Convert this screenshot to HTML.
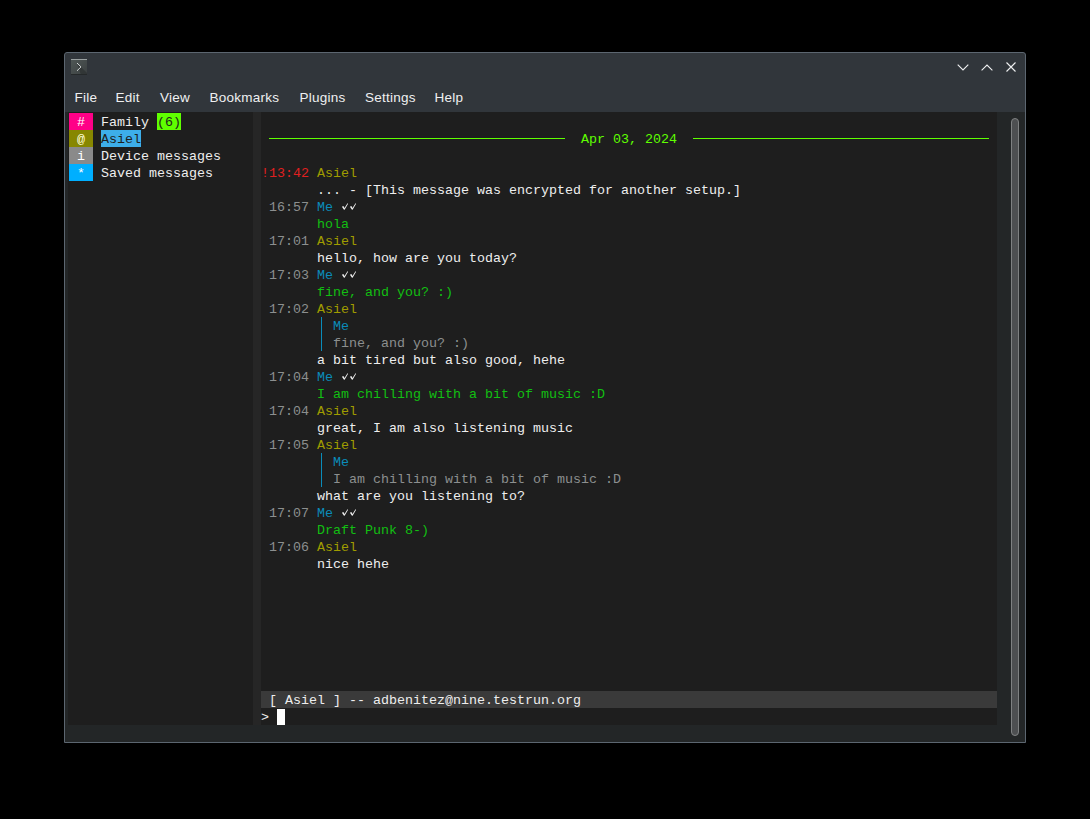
<!DOCTYPE html>
<html><head><meta charset="utf-8">
<style>
html,body{margin:0;padding:0}
body{width:1090px;height:819px;background:#000;position:relative;overflow:hidden;font-family:"Liberation Sans",sans-serif}
#win{position:absolute;left:64px;top:52px;width:960px;height:689px;border:1px solid #5c6670;border-radius:3px 3px 0 0;background:#31363b}
#kon{position:absolute;left:65px;top:112px;width:960px;height:630px;background:#232627}
#term{position:absolute;left:68px;top:112px;width:929px;height:613px;background:#1e1e1e}
#sep{position:absolute;left:253px;top:112px;width:8px;height:613px;background:#262626}
#sb{position:absolute;left:1011px;top:118px;width:6px;height:616px;border:1px solid #7f8182;border-radius:4px;background:#4d4f51}
.m{position:absolute;top:89px;font-size:13.5px;letter-spacing:0.25px;line-height:18px;color:#eff0f1;white-space:pre}
.t{position:absolute;height:17px;line-height:17px;font-family:"Liberation Mono",monospace;font-size:13.333px;white-space:pre}
.b{position:absolute;height:17px}
.hl{position:absolute;height:1px;background:#5fff00}
.qb{position:absolute;width:1px;height:17px;background:#0a8cba}
.ck{position:absolute}
#icon{position:absolute;left:71px;top:59px;width:16px;height:16px;overflow:hidden;background:linear-gradient(135deg,#4f5755,#3b4041);}
#icon:after{content:"";position:absolute;left:0;bottom:0;width:16px;height:1px;background:#25292a}
#icon:before{content:"";position:absolute;left:0;top:0;width:16px;height:1px;background:#9aa0a0}
.tb{position:absolute}
</style></head><body>
<div id="win"></div>
<div id="icon"><svg style="position:absolute;left:0;top:0" width="16" height="16" viewBox="0 0 16 16"><path d="M6 4 L10 8 L16 14 L16 16 L10 16 Z" fill="#2c3131" opacity="0.7"/><path d="M6 4 L10 7.9 L6 11.8" stroke="#d0d4d4" stroke-width="1" fill="none"/></svg></div>
<svg class="tb" style="left:955px;top:60px" width="16" height="16" viewBox="0 0 16 16"><path d="M2.7 4.6 L8 9.9 L13.3 4.6" stroke="#eff0f1" stroke-width="1.1" fill="none"/></svg>
<svg class="tb" style="left:979px;top:60px" width="16" height="16" viewBox="0 0 16 16"><path d="M2.6 10.4 L8 5 L13.4 10.4" stroke="#eff0f1" stroke-width="1.1" fill="none"/></svg>
<svg class="tb" style="left:1003px;top:59px" width="16" height="16" viewBox="0 0 16 16"><path d="M3.5 3.5 L12.5 12.5 M12.5 3.5 L3.5 12.5" stroke="#eff0f1" stroke-width="1.1" fill="none"/></svg>
<div class="m" style="left:74.5px">File</div>
<div class="m" style="left:115.5px">Edit</div>
<div class="m" style="left:160px">View</div>
<div class="m" style="left:209.6px">Bookmarks</div>
<div class="m" style="left:299.4px">Plugins</div>
<div class="m" style="left:365px">Settings</div>
<div class="m" style="left:434.6px">Help</div>
<div id="kon"></div>
<div id="term"></div>
<div id="sep"></div>
<div id="sb"></div>
<div class="b" style="left:69px;top:113px;width:24px;background:#ff0087"></div>
<div class="t" style="left:77px;top:114px;color:#ffffff;">#</div>
<div class="t" style="left:101px;top:114px;color:#eeeeee;">Family</div>
<div class="b" style="left:157px;top:113px;width:24px;background:#5fff00"></div>
<div class="t" style="left:157px;top:114px;color:#1e1e1e;">(6)</div>
<div class="b" style="left:69px;top:130px;width:24px;background:#878700"></div>
<div class="t" style="left:77px;top:131px;color:#ffffd7;">@</div>
<div class="b" style="left:101px;top:130px;width:40px;background:#3daee9"></div>
<div class="t" style="left:101px;top:131px;color:#1e1e1e;">Asiel</div>
<div class="b" style="left:69px;top:147px;width:24px;background:#8a8a8a"></div>
<div class="t" style="left:77px;top:148px;color:#ffffff;">i</div>
<div class="t" style="left:101px;top:148px;color:#eeeeee;">Device messages</div>
<div class="b" style="left:69px;top:164px;width:24px;background:#00afff"></div>
<div class="t" style="left:77px;top:165px;color:#ffffff;">*</div>
<div class="t" style="left:101px;top:165px;color:#eeeeee;">Saved messages</div>
<div class="hl" style="left:269px;top:138px;width:296px"></div>
<div class="t" style="left:581px;top:131px;color:#5fff00;">Apr 03, 2024</div>
<div class="hl" style="left:693px;top:138px;width:296px"></div>
<div class="t" style="left:261px;top:165px;color:#e02020;">!13:42</div>
<div class="t" style="left:317px;top:165px;color:#a09c00;">Asiel</div>
<div class="t" style="left:317px;top:182px;color:#eeeeee;">... - [This message was encrypted for another setup.]</div>
<div class="t" style="left:269px;top:199px;color:#8c8f8f;">16:57</div>
<div class="t" style="left:317px;top:199px;color:#0a8cba;">Me</div>
<svg class="ck" style="left:341px;top:198px" width="16" height="17" viewBox="0 0 16 17"><path d="M0.9 8.7 L2.4 8.0 L3.5 10.0 L6.5 5.2 L7.1 5.7 L3.6 11.8 L3.0 11.8 Z M8.9 8.7 L10.4 8.0 L11.5 10.0 L14.5 5.2 L15.1 5.7 L11.6 11.8 L11.0 11.8 Z" fill="#eeeeee"/></svg>
<div class="t" style="left:317px;top:216px;color:#12bf12;">hola</div>
<div class="t" style="left:269px;top:233px;color:#8c8f8f;">17:01</div>
<div class="t" style="left:317px;top:233px;color:#a09c00;">Asiel</div>
<div class="t" style="left:317px;top:250px;color:#eeeeee;">hello, how are you today?</div>
<div class="t" style="left:269px;top:267px;color:#8c8f8f;">17:03</div>
<div class="t" style="left:317px;top:267px;color:#0a8cba;">Me</div>
<svg class="ck" style="left:341px;top:266px" width="16" height="17" viewBox="0 0 16 17"><path d="M0.9 8.7 L2.4 8.0 L3.5 10.0 L6.5 5.2 L7.1 5.7 L3.6 11.8 L3.0 11.8 Z M8.9 8.7 L10.4 8.0 L11.5 10.0 L14.5 5.2 L15.1 5.7 L11.6 11.8 L11.0 11.8 Z" fill="#eeeeee"/></svg>
<div class="t" style="left:317px;top:284px;color:#12bf12;">fine, and you? :)</div>
<div class="t" style="left:269px;top:301px;color:#8c8f8f;">17:02</div>
<div class="t" style="left:317px;top:301px;color:#a09c00;">Asiel</div>
<div class="qb" style="left:321px;top:317px"></div>
<div class="t" style="left:333px;top:318px;color:#0a8cba;">Me</div>
<div class="qb" style="left:321px;top:334px"></div>
<div class="t" style="left:333px;top:335px;color:#8c8f8f;">fine, and you? :)</div>
<div class="t" style="left:317px;top:352px;color:#eeeeee;">a bit tired but also good, hehe</div>
<div class="t" style="left:269px;top:369px;color:#8c8f8f;">17:04</div>
<div class="t" style="left:317px;top:369px;color:#0a8cba;">Me</div>
<svg class="ck" style="left:341px;top:368px" width="16" height="17" viewBox="0 0 16 17"><path d="M0.9 8.7 L2.4 8.0 L3.5 10.0 L6.5 5.2 L7.1 5.7 L3.6 11.8 L3.0 11.8 Z M8.9 8.7 L10.4 8.0 L11.5 10.0 L14.5 5.2 L15.1 5.7 L11.6 11.8 L11.0 11.8 Z" fill="#eeeeee"/></svg>
<div class="t" style="left:317px;top:386px;color:#12bf12;">I am chilling with a bit of music :D</div>
<div class="t" style="left:269px;top:403px;color:#8c8f8f;">17:04</div>
<div class="t" style="left:317px;top:403px;color:#a09c00;">Asiel</div>
<div class="t" style="left:317px;top:420px;color:#eeeeee;">great, I am also listening music</div>
<div class="t" style="left:269px;top:437px;color:#8c8f8f;">17:05</div>
<div class="t" style="left:317px;top:437px;color:#a09c00;">Asiel</div>
<div class="qb" style="left:321px;top:453px"></div>
<div class="t" style="left:333px;top:454px;color:#0a8cba;">Me</div>
<div class="qb" style="left:321px;top:470px"></div>
<div class="t" style="left:333px;top:471px;color:#8c8f8f;">I am chilling with a bit of music :D</div>
<div class="t" style="left:317px;top:488px;color:#eeeeee;">what are you listening to?</div>
<div class="t" style="left:269px;top:505px;color:#8c8f8f;">17:07</div>
<div class="t" style="left:317px;top:505px;color:#0a8cba;">Me</div>
<svg class="ck" style="left:341px;top:504px" width="16" height="17" viewBox="0 0 16 17"><path d="M0.9 8.7 L2.4 8.0 L3.5 10.0 L6.5 5.2 L7.1 5.7 L3.6 11.8 L3.0 11.8 Z M8.9 8.7 L10.4 8.0 L11.5 10.0 L14.5 5.2 L15.1 5.7 L11.6 11.8 L11.0 11.8 Z" fill="#eeeeee"/></svg>
<div class="t" style="left:317px;top:522px;color:#12bf12;">Draft Punk 8-)</div>
<div class="t" style="left:269px;top:539px;color:#8c8f8f;">17:06</div>
<div class="t" style="left:317px;top:539px;color:#a09c00;">Asiel</div>
<div class="t" style="left:317px;top:556px;color:#eeeeee;">nice hehe</div>
<div class="b" style="left:261px;top:691px;width:736px;background:#3a3a3a"></div>
<div class="t" style="left:269px;top:692px;color:#eeeeee;">[ Asiel ] -- adbenitez@nine.testrun.org</div>
<div class="t" style="left:261px;top:709px;color:#eeeeee;">&gt;</div>
<div style="position:absolute;left:277px;top:709px;width:8px;height:16px;background:#ffffff"></div>
</body></html>
